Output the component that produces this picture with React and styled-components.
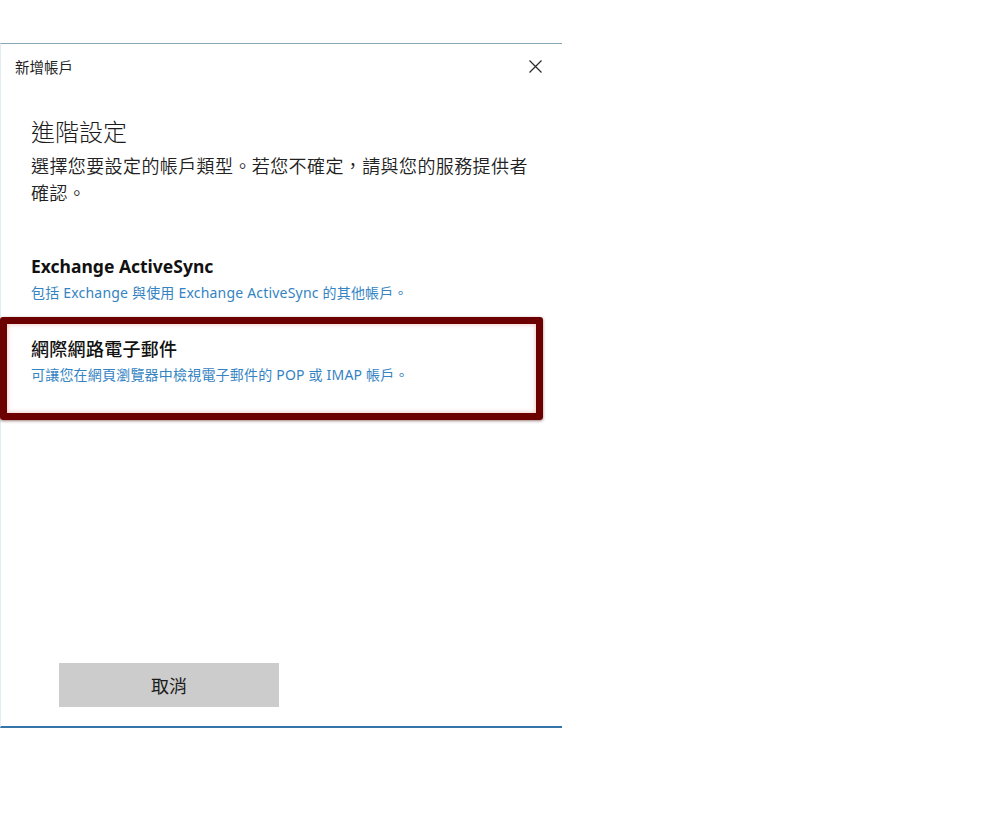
import React from "react";
import styled, { createGlobalStyle } from "styled-components";

const Global = createGlobalStyle`
  html, body { margin: 0; padding: 0; background: #ffffff; }
  body { font-family: "Noto Sans", "Noto Sans CJK TC", sans-serif; color: #1b1b1b; }
`;

const Page = styled.div`
  width: 1000px;
  height: 839px;
  padding-top: 43px;
  box-sizing: border-box;
`;

const Window = styled.div`
  width: 562px;
  height: 685px;
  box-sizing: border-box;
  border-top: 1px solid #8aa6b5;
  border-bottom: 2px solid #3474a8;
  border-left: 1px solid #e3ecf1;
  background: #ffffff;
  display: flex;
  flex-direction: column;
`;

const TitleBar = styled.div`
  height: 44px;
  display: flex;
  align-items: center;
  justify-content: space-between;
  padding: 0 20px 0 14px;
`;

const WindowTitle = styled.span`
  font-family: "Noto Sans CJK TC", sans-serif;
  font-size: 14.5px;
  color: #222;
`;

const CloseButton = styled.button`
  border: 0;
  background: none;
  padding: 0;
  width: 14px;
  height: 14px;
  display: flex;
  align-items: center;
  justify-content: center;
`;

const Content = styled.div`
  padding: 27px 0 0 30px;
`;

const Heading = styled.h1`
  margin: 0;
  font-family: "Noto Sans CJK TC", sans-serif;
  font-weight: 300;
  font-size: 24px;
  line-height: 32px;
  color: #1b1b1b;
`;

const Description = styled.p`
  margin: 5px 0 0;
  max-width: 505px;
  font-family: "Noto Sans CJK TC", sans-serif;
  font-weight: 350;
  font-size: 18px;
  letter-spacing: 0.4px;
  line-height: 27px;
  color: #222;
`;

const Options = styled.div`
  margin-top: 48px;
  display: flex;
  flex-direction: column;
`;

const Option = styled.div`
  box-sizing: border-box;
  width: ${(p) => (p.$highlight ? "543px" : "auto")};
  margin-left: ${(p) => (p.$highlight ? "-1px" : "0")};
  padding: ${(p) => (p.$highlight ? "13px 0 28px 24px" : "0 0 14px 30px")};
  border: ${(p) => (p.$highlight ? "7px solid #6c0000" : "0")};
  border-radius: ${(p) => (p.$highlight ? "3px" : "0")};
  box-shadow: ${(p) =>
    p.$highlight
      ? "inset 0 0 5px rgba(210, 60, 60, 0.35), 0 1px 3px rgba(60, 0, 0, 0.5)"
      : "none"};
`;

const OptionTitle = styled.div`
  font-family: "Noto Sans", "Noto Sans CJK TC", sans-serif;
  font-weight: ${(p) => (p.$cjk ? 500 : 700)};
  font-size: ${(p) => (p.$cjk ? "18px" : "17.5px")};
  line-height: 24px;
  letter-spacing: ${(p) => (p.$cjk ? "0.3px" : "0")};
  color: #111;
`;

const OptionSub = styled.div`
  margin-top: ${(p) => (p.$cjk ? "4px" : "5px")};
  font-family: "Noto Sans", "Noto Sans CJK TC", sans-serif;
  font-size: 14px;
  line-height: 20px;
  letter-spacing: 0.2px;
  color: #3483c2;
`;

const Spacer = styled.div`
  flex: 1;
`;

const Footer = styled.div`
  padding: 0 0 19px 58px;
`;

const CancelButton = styled.button`
  width: 220px;
  height: 44px;
  border: 0;
  background: #cccccc;
  font-family: "Noto Sans CJK TC", sans-serif;
  font-size: 18px;
  color: #1b1b1b;
  padding: 0;
`;

export default function App() {
  return (
    <Page>
      <Global />
      <Window>
        <TitleBar>
          <WindowTitle>新增帳戶</WindowTitle>
          <CloseButton aria-label="close">
            <svg width="13" height="13" viewBox="0 0 13 13">
              <path d="M0.5 0.5 L12.5 12.5 M12.5 0.5 L0.5 12.5" stroke="#2a2a2a" strokeWidth="1.2" fill="none" />
            </svg>
          </CloseButton>
        </TitleBar>
        <Content>
          <Heading>進階設定</Heading>
          <Description>選擇您要設定的帳戶類型。若您不確定，請與您的服務提供者確認。</Description>
        </Content>
        <Options>
          <Option>
            <OptionTitle>Exchange ActiveSync</OptionTitle>
            <OptionSub>包括 Exchange 與使用 Exchange ActiveSync 的其他帳戶。</OptionSub>
          </Option>
          <Option $highlight>
            <OptionTitle $cjk>網際網路電子郵件</OptionTitle>
            <OptionSub $cjk>可讓您在網頁瀏覽器中檢視電子郵件的 POP 或 IMAP 帳戶。</OptionSub>
          </Option>
        </Options>
        <Spacer />
        <Footer>
          <CancelButton>取消</CancelButton>
        </Footer>
      </Window>
    </Page>
  );
}
